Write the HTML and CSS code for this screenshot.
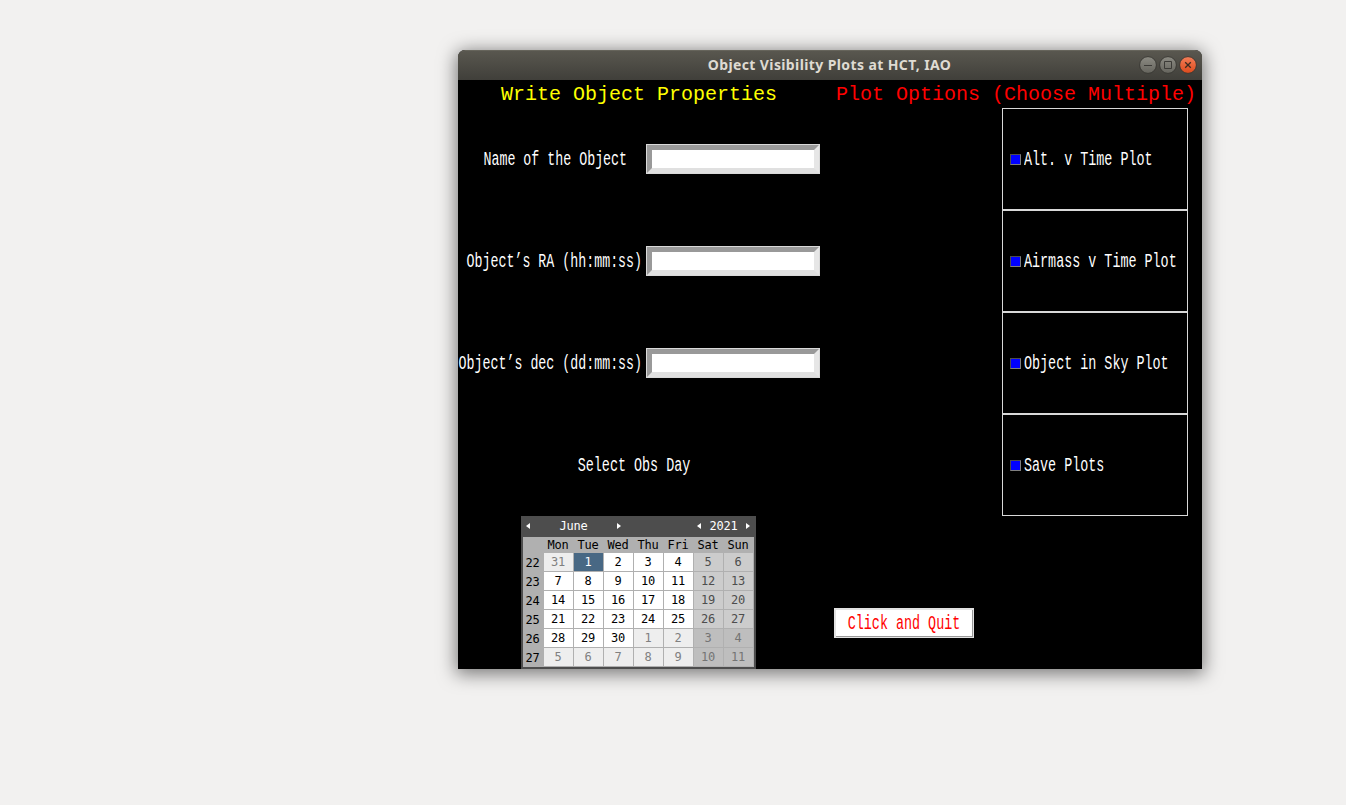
FILE: index.html
```html
<!DOCTYPE html>
<html lang="en">
<head>
<meta charset="utf-8">
<title>Object Visibility Plots at HCT, IAO</title>
<link rel="stylesheet" href="styles.css">
</head>
<body>
<main class="window">
  <header class="titlebar">
    <h1 class="title">Object Visibility Plots at HCT, IAO</h1>
    <div class="controls">
      <svg class="control" viewBox="0 0 18 18"><defs><linearGradient id="g" x2="0" y2="1"><stop stop-color="#8c8b83"/><stop offset="1" stop-color="#65645d"/></linearGradient></defs><circle cx="9" cy="9" r="8.4" fill="url(#g)" stroke="#3a3934"/><path d="M5 9.5h8" stroke="#3c3b37"/></svg>
      <svg class="control" viewBox="0 0 18 18"><circle cx="9" cy="9" r="8.4" fill="url(#g)" stroke="#3a3934"/><path d="M5.5 5.5h7v7h-7z" fill="none" stroke="#3c3b37"/></svg>
      <svg class="control" viewBox="0 0 18 18"><defs><linearGradient id="r" x2="0" y2="1"><stop stop-color="#f37e58"/><stop offset="1" stop-color="#dc4a1c"/></linearGradient></defs><circle cx="9" cy="9" r="8.4" fill="url(#r)" stroke="#3a3934"/><path d="M6.2 6.2l5.6 5.6M11.8 6.2l-5.6 5.6" stroke="#3c2b20" stroke-width="1.3"/></svg>
    </div>
  </header>
  <div class="content">
    <section class="form">
      <h2 class="heading yellow">Write Object Properties</h2>
      <label class="field"><span class="caption spaced"><span class="narrow from-right">Name of the Object</span></span><input class="entry"></label>
      <label class="field"><span class="caption"><span class="narrow from-right">Object’s RA (hh:mm:ss)</span></span><input class="entry"></label>
      <label class="field"><span class="caption"><span class="narrow from-right">Object’s dec (dd:mm:ss)</span></span><input class="entry"></label>
      <div class="select-day"><span class="narrow">Select Obs Day</span></div>
      <div class="calendar">
        <div class="cal-head">
          <svg class="arrow" viewBox="0 0 4 6"><path d="M4 0v6L0 3z"/></svg><span class="month">June</span><svg class="arrow" viewBox="0 0 4 6"><path d="M0 0v6l4-3z"/></svg>
          <svg class="arrow year-prev" viewBox="0 0 4 6"><path d="M4 0v6L0 3z"/></svg><span class="year">2021</span><svg class="arrow" viewBox="0 0 4 6"><path d="M0 0v6l4-3z"/></svg>
        </div>
        <div class="cal-grid">
          <i></i><b>Mon</b><b>Tue</b><b>Wed</b><b>Thu</b><b>Fri</b><b>Sat</b><b>Sun</b>
          <i>22</i><span class="other">31</span><span class="selected">1</span><span>2</span><span>3</span><span>4</span><span class="weekend">5</span><span class="weekend">6</span>
          <i>23</i><span>7</span><span>8</span><span>9</span><span>10</span><span>11</span><span class="weekend">12</span><span class="weekend">13</span>
          <i>24</i><span>14</span><span>15</span><span>16</span><span>17</span><span>18</span><span class="weekend">19</span><span class="weekend">20</span>
          <i>25</i><span>21</span><span>22</span><span>23</span><span>24</span><span>25</span><span class="weekend">26</span><span class="weekend">27</span>
          <i>26</i><span>28</span><span>29</span><span>30</span><span class="other">1</span><span class="other">2</span><span class="other-weekend">3</span><span class="other-weekend">4</span>
          <i>27</i><span class="other">5</span><span class="other">6</span><span class="other">7</span><span class="other">8</span><span class="other">9</span><span class="other-weekend">10</span><span class="other-weekend">11</span>
        </div>
      </div>
    </section>
    <section class="options">
      <h2 class="heading red">Plot Options (Choose Multiple)</h2>
      <div class="choices">
        <div class="choice"><span class="box"></span><span class="narrow from-left">Alt. v Time Plot</span></div>
        <div class="choice"><span class="box"></span><span class="narrow from-left">Airmass v Time Plot</span></div>
        <div class="choice"><span class="box"></span><span class="narrow from-left">Object in Sky Plot</span></div>
        <div class="choice"><span class="box"></span><span class="narrow from-left">Save Plots</span></div>
      </div>
      <button class="quit"><span class="narrow">Click and Quit</span></button>
    </section>
  </div>
</main>
</body>
</html>
```
FILE: styles.css
```css
* { box-sizing: border-box; }
body { margin: 0; height: 805px; overflow: hidden; padding: 50px 0 0 458px; background: #f2f1f0; }
.window { width: 744px; height: 619px; border-radius: 7px 7px 0 0; background: #000; box-shadow: 0 3px 18px 2px rgba(0,0,0,.5); }
.titlebar { height: 30px; display: grid; grid-template-columns: 1fr auto; align-items: center; padding: 0 5px 1px 62px; border-radius: 7px 7px 0 0; background: linear-gradient(#59574f, #403f3a); border-top: 1px solid #66645b; }
.title { margin: 0; color: #dfdbd2; font: bold 14px/26px "Noto Sans", sans-serif; letter-spacing: .39px; text-align: center; white-space: nowrap; }
.controls { display: flex; gap: 2px; }
.control { width: 18px; height: 18px; display: block; }
.content { display: flex; height: 589px; }
.form { width: 362px; }
.options { width: 382px; }
.heading { margin: 0; height: 28px; font: 20px/30px "Liberation Mono", monospace; white-space: nowrap; }
.yellow { color: #ff0; padding-left: 43px; }
.red { color: #f00; padding-left: 16px; }
.narrow { display: inline-block; padding-top: 2px; font: 20px/24px "Liberation Mono", monospace; white-space: pre; transform: scaleX(.6695); }
.from-right { transform-origin: right; transform: scaleX(.6645); }
.from-left { transform-origin: left; }
.field { display: flex; align-items: center; height: 102px; color: #fff; }
.caption { width: 188px; padding-right: 3.5px; display: flex; justify-content: flex-end; }
.spaced { padding-right: 18.5px; }
.entry { width: 172px; height: 28px; margin: 0 1px; padding: 0; border: 5px solid; border-color: #999 #e6e6e6 #e0e0e0 #999; background: #fff; box-shadow: 0 0 0 1px #d9d9d9; outline: 0; }
.select-day { height: 102px; display: flex; align-items: center; justify-content: center; padding-right: 9px; color: #fff; }
.calendar { width: 235px; height: 153px; margin-left: 63px; padding: 0 2px 2px; background: #4d4d4d; font: 12px/18px "DejaVu Sans Mono", monospace; letter-spacing: -.22px; }
.cal-head { height: 21px; padding: 0 3px; display: flex; align-items: center; color: #fff; line-height: 18px; }
.cal-head span { padding-bottom: 2px; }
.arrow { width: 4px; height: 6px; fill: #fff; margin-bottom: 2px; }
.month { width: 87px; text-align: center; }
.year-prev { margin-left: 76px; }
.year { width: 45px; text-align: center; }
.cal-grid { display: grid; grid-template-columns: 20px repeat(7, 29px); grid-template-rows: 15px repeat(6, 18px); gap: 1px; height: 130px; background: #b0b0b0; color: #000; text-align: center; }
.cal-grid b { font-weight: 400; line-height: 16px; padding-right: 1px; }
.cal-grid i { font-style: normal; line-height: 20px; padding-right: 1px; }
.cal-grid span { background: #fff; padding-right: 1px; }
.cal-grid .weekend { background: #ccc; color: #4d4d4d; }
.cal-grid .other { background: #eee; color: #808080; }
.cal-grid .other-weekend { background: #bebebe; color: #747474; }
.cal-grid .selected { background: #486884; color: #fff; }
.choices { width: 186px; margin-left: 182px; }
.choice { height: 102px; border: 1px solid #d9d9d9; display: flex; align-items: center; padding-left: 7px; color: #fff; gap: 3px; }
.box { flex: none; width: 11px; height: 11px; background: #00f; border: 1px solid; border-color: #4d4d4d #7f7f7f #7f7f7f #4d4d4d; }
.quit { display: flex; align-items: center; justify-content: center; width: 140px; height: 30px; margin: 92px 0 0 14px; padding: 0 1px 2px 0; border: 2px solid #e2e2e2; border-width: 2px 1px 1px 2px; background: #fff; color: #f00; box-shadow: inset -1px -1px #999; }
```
